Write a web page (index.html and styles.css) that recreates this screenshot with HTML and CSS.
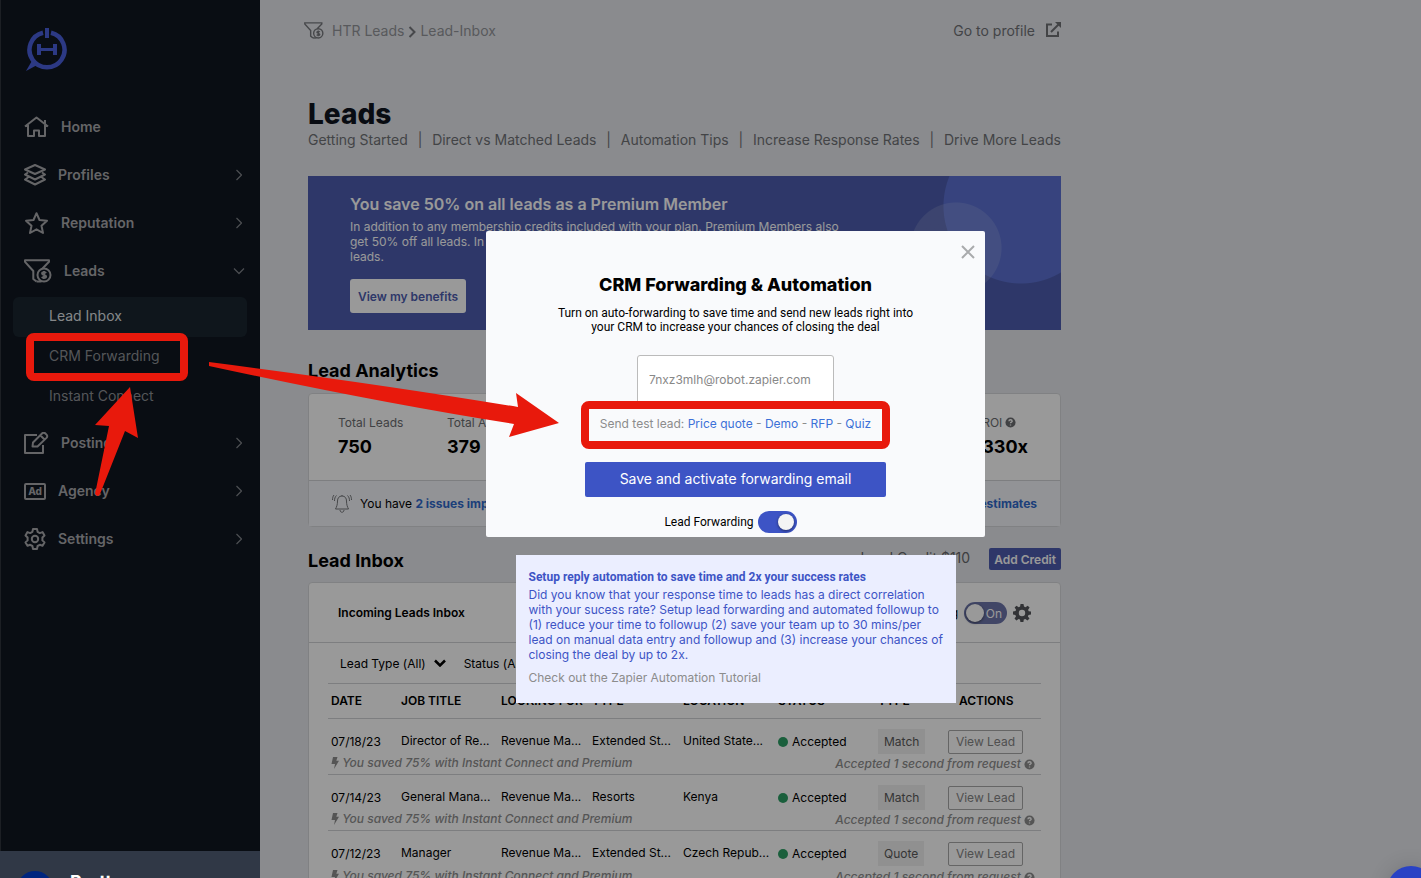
FILE: index.html
```html
<!DOCTYPE html>
<html lang="en">
<head>
    <meta charset="UTF-8">
    <meta name="viewport" content="width=device-width, initial-scale=1.0">
    <title>Lead Inbox</title>
    <link rel="stylesheet" href="styles.css">
</head>
<body>
    <!-- Shared icons -->
    <svg class="sprite" aria-hidden="true">
        <symbol id="funnel" viewBox="0 0 28 24">
            <path d="M12.5 22.5 9.3 20v-8L1 2.800V1.200h24v1.600L18.500 9.500" />
            <circle cx="20" cy="16" r="6.500" />
            <path d="M22 14.200c-.5-.8-1.200-1-2-1-1 0-1.900.5-1.900 1.400 0 2 4 .8 4 2.900 0 .9-1 1.400-2.100 1.400-.9 0-1.700-.4-2.100-1.100M20 12v8" />
            <path d="M12.500 22.500h5" />
        </symbol>
        <symbol id="chev" viewBox="0 0 8 12"><path d="M1.500 1 6.500 6l-5 5" /></symbol>
        <symbol id="help" viewBox="0 0 12 12">
            <circle cx="6" cy="6" r="5.500" fill="currentColor" stroke="none" />
            <path class="help-mark" d="M4.300 4.600C4.300 3.500 5 3 6 3s1.800.6 1.800 1.500C7.800 5.600 6 5.600 6 6.800M6 8.200v1.200" />
        </symbol>
        <symbol id="bolt" viewBox="0 0 8 12"><path d="M2 0h4.500L5.300 3.800H8L3 12l1-5H.5z" fill="currentColor" stroke="none" /></symbol>
    </svg>

    <div class="app">
        <aside class="sidebar">
            <a href="#" class="logo" aria-label="Dashboard">
                <svg width="42" height="46" viewBox="0 0 42 46">
                    <path d="M17 5.800a17.500 17.500 0 1 0 8 0" fill="none" stroke="currentColor" stroke-width="4.500" />
                    <path d="M21 1v10" stroke="currentColor" stroke-width="4" />
                    <path d="M0 44 7 32l6 5z" fill="currentColor" />
                    <path d="M13 17v11M29 17v11" stroke="currentColor" stroke-width="4" />
                    <path d="M13 22.500h16" stroke="currentColor" stroke-width="3" />
                </svg>
            </a>
            <nav>
                <ul class="menu">
                    <li><a href="#" class="menu-item">
                        <svg width="25" height="22" viewBox="0 0 25 22"><path d="M1 10.500 12.500 1.500 24 10.500M4 9v11h6v-5.500h5V20h6V9M21 7.500V4" /></svg>
                        <span>Home</span></a></li>
                    <li><a href="#" class="menu-item">
                        <svg width="22" height="22" viewBox="0 0 22 22"><path d="M11 1 21 5.500 11 10 1 5.500zM4 8.500 1 10.500l10 5 10-5-3-2M4 13.500l-3 2 10 5 10-5-3-2" /></svg>
                        <span>Profiles</span><svg class="arrow" width="8" height="12"><use href="#chev" /></svg></a></li>
                    <li><a href="#" class="menu-item">
                        <svg width="25" height="22" viewBox="0 0 25 22"><path d="m12.500 1.200 3 6.800 7.500.8-5.500 5 1.500 7.200-6.500-3.700L6 21l1.500-7.200-5.500-5L9.500 8z" /></svg>
                        <span>Reputation</span><svg class="arrow" width="8" height="12"><use href="#chev" /></svg></a></li>
                    <li>
                        <a href="#" class="menu-item">
                            <svg width="28" height="24"><use href="#funnel" /></svg>
                            <span>Leads</span><svg class="arrow down" width="8" height="12"><use href="#chev" /></svg></a>
                        <ul class="submenu">
                            <li><a href="#" class="active">Lead Inbox</a></li>
                            <li><a href="#">CRM Forwarding</a></li>
                            <li><a href="#">Instant Connect</a></li>
                        </ul>
                    </li>
                    <li><a href="#" class="menu-item">
                        <svg width="25" height="22" viewBox="0 0 25 22"><path d="M13 3H1v18h18V13M8.500 14.500l.5-4 9-9c1-1 2.400-1 3.400 0l1.100 1.100c1 1 1 2.300 0 3.300l-9 8.600zM16.500 3.500l4 4" /></svg>
                        <span>Posting</span><svg class="arrow" width="8" height="12"><use href="#chev" /></svg></a></li>
                    <li><a href="#" class="menu-item">
                        <b class="ad-icon">Ad</b>
                        <span>Agency</span><svg class="arrow" width="8" height="12"><use href="#chev" /></svg></a></li>
                    <li><a href="#" class="menu-item">
                        <svg width="22" height="22" viewBox="0 0 22 22"><path d="M9 1h4l.6 2.900 2.200 1.200 2.700-1 2 3.400-2.100 2v2.900l2.100 2-2 3.400-2.700-1-2.200 1.200L13 21H9l-.6-3-2.200-1.200-2.700 1-2-3.400 2.100-2V9.500l-2.100-2 2-3.400 2.700 1 2.200-1.200z" /><circle cx="11" cy="11" r="3.200" /></svg>
                        <span>Settings</span><svg class="arrow" width="8" height="12"><use href="#chev" /></svg></a></li>
                </ul>
            </nav>
        </aside>

        <main class="content">
            <header class="topbar">
                <div class="crumbs">
                    <svg width="20" height="17"><use href="#funnel" /></svg>
                    <a href="#">HTR Leads</a>
                    <svg class="crumb-arrow" width="8" height="12"><use href="#chev" /></svg>
                    <a href="#">Lead-Inbox</a>
                </div>
                <a href="#" class="profile-link">Go to profile
                    <svg width="15" height="15" viewBox="0 0 15 15"><path d="M6 2.500H1V14h11V9.500M5 10l8-8" /><path d="M9 0h6v6z" fill="currentColor" stroke="none" /></svg>
                </a>
            </header>

            <h1>Leads</h1>
            <div class="help-links">
                <a href="#">Getting Started</a><i>|</i>
                <a href="#">Direct vs Matched Leads</a><i>|</i>
                <a href="#">Automation Tips</a><i>|</i>
                <a href="#">Increase Response Rates</a><i>|</i>
                <a href="#">Drive More Leads</a>
            </div>

            <section class="banner">
                <h3>You save 50% on all leads as a Premium Member</h3>
                <p>In addition to any membership credits included with your plan. Premium Members also get 50% off all leads. In the last month you could have saved on all of your incoming leads.</p>
                <button class="benefits">View my benefits</button>
            </section>

            <h2>Lead Analytics</h2>
            <section class="card analytics">
                <div class="stats">
                    <div class="stat"><span>Total Leads</span><b>750</b></div>
                    <div class="stat"><span>Total Accepted</span><b>379</b></div>
                    <div class="stat last"><span>ROI <svg width="11" height="11"><use href="#help" /></svg></span><b>330x</b></div>
                </div>
                <div class="alert">
                    <svg width="20" height="20" viewBox="0 0 20 20"><path d="M10 2c-3 0-4.500 2.200-4.500 5 0 4-1 6-2 8h13c-1-2-2-4-2-8 0-2.800-1.500-5-4.500-5zM10 2V1M8 16c0 3 4 3 4 0M4.500 1.500C3 3 2.500 4.500 2.500 7M2 1C.8 2.500.5 4 .5 6M15.500 1.500c1.500 1.500 2 3 2 5.500M18 1c1.200 1.500 1.500 3 1.500 5" /></svg>
                    <span>You have <a href="#">2 issues impacting leads</a></span>
                    <a href="#" class="estimates">Edit estimates</a>
                </div>
            </section>

            <div class="inbox-head">
                <h2>Lead Inbox</h2>
                <span>Lead Credit $110</span>
                <button class="add-credit">Add Credit</button>
            </div>
            <section class="card">
                <div class="inbox-title">
                    <h4>Incoming Leads Inbox</h4>
                    <label for="incoming">Receiving</label>
                    <span class="switch on-label"><input type="checkbox" id="incoming"><em>On</em></span>
                    <svg class="gear" width="18" height="18" viewBox="0 0 18 18"><path fill-rule="evenodd" d="M7.500 0h3l.5 2.600 1.500.6L14.700 1.700l1.900 1.900-1.500 2.200.6 1.500L18 7.500v3l-2.500.4-.6 1.500 1.600 2.200-2 1.900-2.200-1.500-1.500.6-.4 2.400h-3L7 15.600 5.600 15l-2.200 1.500-1.900-1.900L3 12.400l-.6-1.500L0 10.500v-3l2.500-.4.6-1.400-1.500-2.200 1.900-1.800 2.200 1.500 1.400-.6zM9 5.800a3.200 3.200 0 1 0 0 6.400 3.200 3.200 0 0 0 0-6.400z" /></svg>
                </div>
                <div class="filters">
                    <button>Lead Type (All) <svg width="12" height="8" viewBox="0 0 12 8"><path d="m1 1.500 5 5 5-5" /></svg></button>
                    <button>Status (Any) <svg width="12" height="8" viewBox="0 0 12 8"><path d="m1 1.500 5 5 5-5" /></svg></button>
                </div>
                <table>
                    <colgroup><col class="c-date"><col class="c-job"><col class="c-look"><col class="c-kind"><col class="c-loc"><col class="c-status"><col class="c-type"><col></colgroup>
                    <thead>
                        <tr><th>DATE</th><th>JOB TITLE</th><th>LOOKING FOR</th><th>TYPE</th><th>LOCATION</th><th>STATUS</th><th>TYPE</th><th class="actions">ACTIONS</th></tr>
                    </thead>
                    <tbody>
                        <tr class="lead"><td>07/18/23</td><td class="up">Director of Re...</td><td class="up">Revenue Ma...</td><td class="up">Extended St...</td><td class="up">United State...</td><td><i class="dot"></i>Accepted</td><td><span class="tag">Match</span></td><td><button class="view">View Lead</button></td></tr>
                        <tr class="note"><td colspan="4"><svg width="8" height="12"><use href="#bolt" /></svg> You saved 75% with Instant Connect and Premium</td><td colspan="4" class="right">Accepted 1 second from request <svg width="11" height="11"><use href="#help" /></svg></td></tr>
                    </tbody>
                    <tbody>
                        <tr class="lead"><td>07/14/23</td><td class="up">General Mana...</td><td class="up">Revenue Ma...</td><td class="up">Resorts</td><td class="up">Kenya</td><td><i class="dot"></i>Accepted</td><td><span class="tag">Match</span></td><td><button class="view">View Lead</button></td></tr>
                        <tr class="note"><td colspan="4"><svg width="8" height="12"><use href="#bolt" /></svg> You saved 75% with Instant Connect and Premium</td><td colspan="4" class="right">Accepted 1 second from request <svg width="11" height="11"><use href="#help" /></svg></td></tr>
                    </tbody>
                    <tbody>
                        <tr class="lead"><td>07/12/23</td><td class="up">Manager</td><td class="up">Revenue Ma...</td><td class="up">Extended St...</td><td class="up">Czech Repub...</td><td><i class="dot"></i>Accepted</td><td><span class="tag">Quote</span></td><td><button class="view">View Lead</button></td></tr>
                        <tr class="note"><td colspan="4"><svg width="8" height="12"><use href="#bolt" /></svg> You saved 75% with Instant Connect and Premium</td><td colspan="4" class="right">Accepted 1 second from request <svg width="11" height="11"><use href="#help" /></svg></td></tr>
                    </tbody>
                </table>
            </section>
        </main>
    </div>

    <!-- Modal -->
    <div class="overlay">
        <div class="modal" role="dialog" aria-labelledby="modal-title">
            <button class="close" aria-label="Close">
                <svg width="14" height="14" viewBox="0 0 14 14"><path d="m1 1 12 12M13 1 1 13" /></svg>
            </button>
            <h2 id="modal-title">CRM Forwarding &amp; Automation</h2>
            <p>Turn on auto-forwarding to save time and send new leads right into<br>your CRM to increase your chances of closing the deal</p>
            <input type="email" class="email" aria-label="Forwarding email" value="7nxz3mlh@robot.zapier.com">
            <div class="test-lead">Send test lead: <a href="#">Price quote</a> - <a href="#">Demo</a> - <a href="#">RFP</a> - <a href="#">Quiz</a></div>
            <button class="save">Save and activate forwarding email</button>
            <div class="forwarding">
                <label for="forward">Lead Forwarding</label>
                <span class="switch"><input type="checkbox" id="forward" checked></span>
            </div>
        </div>
        <div class="tip">
            <h5>Setup reply automation to save time and 2x your success rates</h5>
            <p>Did you know that your response time to leads has a direct correlation<br>with your sucess rate? Setup lead forwarding and automated followup to<br>(1) reduce your time to followup (2) save your team up to 30 mins/per<br>lead on manual data entry and followup and (3) increase your chances of<br>closing the deal by up to 2x.</p>
            <a href="#">Check out the Zapier Automation Tutorial</a>
        </div>
    </div>

    <div class="user-bar"><span class="avatar"></span><b>Pratt</b></div>
    <button class="chat" aria-label="Open chat"></button>

    <!-- Walkthrough markers -->
    <svg class="markers" width="900" height="520" viewBox="0 0 900 520" aria-hidden="true">
        <rect x="30" y="337" width="154" height="40" rx="4" />
        <rect x="585" y="405" width="301" height="40" rx="4" />
        <path d="M130 387 138 438 125 431 100 494Q98 498 95 494L109 426 95 425z" />
        <path d="M209 362 Q380 384 518 407L516 393 559 423 509 437 514 424Q380 403 209 366z" />
    </svg>
</body>
</html>
```
FILE: styles.css
```css
* {
    box-sizing: border-box;
}
body {
    margin: 0;
    height: 100vh;
    overflow: hidden;
    position: relative;
    font-family: Inter, "Liberation Sans", sans-serif;
    font-size: 12px;
    line-height: 15px;
    color: #000;
    background: #e6e8ed;
}
a {
    color: inherit;
    text-decoration: none;
}
button {
    font: inherit;
    color: inherit;
    border: 0;
    padding: 0;
    background: none;
    cursor: pointer;
}
h1, h2, h3, h4, h5, p, ul {
    margin: 0;
    padding: 0;
}
ul {
    list-style: none;
}
svg {
    fill: none;
    stroke: currentColor;
    flex: none;
}
.sprite {
    position: absolute;
    width: 0;
    height: 0;
}
.app {
    display: flex;
    height: 100vh;
    overflow: hidden;
}

/* Sidebar */
.sidebar {
    width: 260px;
    flex: none;
    background: #0f1621;
    border-left: 1px solid #30353c;
    color: #a9a9ac;
}
.logo {
    display: block;
    height: 103px;
    padding: 27px 0 0 25px;
    color: #4a5fdc;
}
.logo svg {
    stroke: none;
}
.menu-item {
    display: flex;
    align-items: center;
    gap: 12px;
    height: 48px;
    padding: 0 17px 0 23px;
    font-size: 14px;
    font-weight: 600;
}
.menu-item span {
    padding-bottom: 2px;
}
.menu-item svg {
    stroke-width: 2;
    stroke-linejoin: round;
}
.menu-item .arrow {
    margin-left: auto;
    color: #808388;
    stroke-width: 1.2;
}
.menu-item .down {
    transform: rotate(90deg);
}
.ad-icon {
    width: 22px;
    height: 17px;
    border: 2px solid;
    border-radius: 2px;
    font-size: 10px;
    line-height: 13px;
    font-weight: 800;
    text-align: center;
}
.submenu {
    padding: 2px 13px 2px 12px;
}
.submenu a {
    display: block;
    height: 40px;
    padding-left: 36px;
    border-radius: 6px;
    font-size: 14px;
    line-height: 38px;
    color: #8d9094;
}
.submenu .active {
    color: #dfe1e4;
    background: #1a252f;
}

/* Page */
.content {
    flex: 1;
    max-width: 849px;
    padding: 0 48px;
}
.topbar {
    display: flex;
    justify-content: space-between;
    height: 97px;
    padding-top: 22px;
    font-size: 14px;
    line-height: 17px;
    color: #77797d;
}
.crumbs {
    display: flex;
    align-items: flex-start;
    margin-left: -4px;
}
.crumbs > svg:first-child {
    margin-right: 8px;
    stroke-width: 2;
}
.crumb-arrow {
    margin: 4px 4px 0;
    stroke-width: 2;
}
.crumbs a {
    color: #93959a;
}
.profile-link {
    display: flex;
    gap: 11px;
    color: #707276;
}
.profile-link svg {
    stroke-width: 2;
}
h1 {
    font-size: 28px;
    line-height: 34px;
    font-weight: 800;
    color: #10151f;
}
.help-links {
    display: flex;
    justify-content: space-between;
    margin-bottom: 28px;
    font-size: 14px;
    line-height: 17px;
    color: #707276;
}
.help-links i {
    font-style: normal;
}
.banner {
    height: 154px;
    padding: 19px 210px 17px 42px;
    color: #fff;
    background:
        radial-gradient(circle at 648px 72px, rgba(255, 255, 255, 0.13) 45px, transparent 46px),
        radial-gradient(circle at 713px 30px, #5c71d2 77px, transparent 78px),
        #4d5daf;
}
.banner h3 {
    font-size: 16px;
    line-height: 19px;
    font-weight: 600;
    margin-bottom: 5px;
}
.banner p {
    margin-bottom: 15px;
}
.benefits {
    height: 34px;
    padding: 0 8px;
    border-radius: 3px;
    background: #fff;
    color: #4d5daf;
    font-weight: 600;
}
h2 {
    font-size: 18px;
    line-height: 22px;
    font-weight: 700;
}
.content > h2 {
    margin: 30px 0 11px;
}
.card {
    background: #fff;
    border: 1px solid #d6d8db;
    border-radius: 4px;
}
.stats {
    display: flex;
    height: 86px;
    padding: 20px 32px 0 29px;
}
.stat {
    width: 109px;
}
.stat span {
    display: flex;
    align-items: center;
    gap: 3px;
    line-height: 17px;
    margin-bottom: 5px;
    color: #6b6d70;
    white-space: nowrap;
}
.stat b {
    font-size: 18px;
    line-height: 22px;
}
.stat.last {
    width: auto;
    margin-left: auto;
}
.help-mark {
    stroke: #fff;
    stroke-width: 1.5;
}
.alert {
    display: flex;
    align-items: center;
    gap: 8px;
    height: 46px;
    padding: 0 23px;
    border-top: 1px solid #d0d2d6;
    background: #f3f5fa;
}
.alert svg {
    color: #75777a;
}
.alert a {
    color: #3069cb;
    font-weight: 700;
}
.estimates {
    margin-left: auto;
}
.inbox-head {
    display: flex;
    align-items: flex-start;
    margin: 21px 0 12px;
    height: 22px;
}
.inbox-head h2 {
    margin-right: auto;
    padding-top: 2px;
}
.inbox-head span {
    margin-right: 19px;
    font-size: 14px;
    line-height: 20px;
    color: #66686c;
}
.add-credit {
    height: 22px;
    padding: 0 5px;
    border-radius: 2px;
    background: #4d5daf;
    color: #fff;
    font-weight: 600;
}
.inbox-title {
    display: flex;
    align-items: center;
    height: 60px;
    padding: 0 29px;
    border-bottom: 1px solid #d0d2d6;
}
.inbox-title h4 {
    margin-right: auto;
    font-weight: 600;
}
.switch {
    display: flex;
    position: relative;
}
.switch input {
    appearance: none;
    width: 39px;
    height: 22px;
    margin: 0;
    padding: 3px;
    border-radius: 11px;
    background: #3d54c5;
}
.switch input::before {
    content: "";
    display: block;
    width: 16px;
    height: 16px;
    border-radius: 50%;
    background: #f4f4f4;
    box-shadow: 0 1px 3px rgba(0, 0, 0, 0.5);
}
.switch input:checked::before {
    margin-left: 17px;
}
.on-label {
    margin: 0 6px;
}
.on-label input {
    width: 43px;
    background: #6d76ab;
    padding: 2px;
}
.on-label input::before {
    width: 18px;
    height: 18px;
    background: #fff;
}
.on-label em {
    position: absolute;
    right: 5px;
    top: 4px;
    font-style: normal;
    color: #fff;
}
.gear {
    fill: #54565a;
    stroke: none;
}
.filters {
    display: flex;
    gap: 18px;
    height: 40px;
    padding: 0 31px;
}
.filters button {
    display: flex;
    align-items: center;
    gap: 8px;
}
.filters svg {
    stroke-width: 2.5;
}

/* Leads table */
table {
    width: calc(100% - 38px);
    margin: 0 19px;
    table-layout: fixed;
    border-collapse: collapse;
}
.c-date {
    width: 70px;
}
.c-job, .c-status {
    width: 100px;
}
.c-look, .c-kind {
    width: 91px;
}
.c-loc {
    width: 95px;
}
.c-type {
    width: 70px;
}
thead {
    border-top: 1px solid #d0d2d6;
}
tbody {
    border-top: 1px solid #d0d2d6;
}
th {
    height: 35px;
    padding: 0 3px 2px;
    text-align: left;
    font-weight: 600;
    white-space: nowrap;
}
th.actions {
    padding-left: 14px;
}
td {
    padding: 0 3px;
    white-space: nowrap;
}
.lead td {
    height: 36px;
    padding-top: 10px;
}
.lead .up {
    padding-top: 7px;
}
.dot {
    display: inline-block;
    width: 10px;
    height: 10px;
    margin-right: 4px;
    border-radius: 50%;
    background: #2c9f64;
    vertical-align: -1px;
}
.tag {
    display: inline-block;
    padding: 5px 6px;
    background: #f0f0f0;
    color: #5a5a5a;
}
.view {
    width: 75px;
    height: 24px;
    border: 1px solid #a8a8a8;
    border-radius: 2px;
    color: #858585;
}
.note td {
    height: 20px;
    padding-bottom: 3px;
    font-style: italic;
    font-weight: 500;
    color: #8e8e8e;
}
.note .right {
    padding-right: 6px;
    padding-bottom: 1px;
    text-align: right;
}
.note svg {
    vertical-align: -2px;
}

/* Modal */
.overlay {
    position: absolute;
    inset: 0;
    display: flex;
    flex-direction: column;
    align-items: center;
    gap: 18px;
    padding: 231px 0 0 50px;
    background: rgba(0, 0, 0, 0.4);
}
.modal {
    position: relative;
    display: flex;
    flex-direction: column;
    align-items: center;
    width: 499px;
    padding: 43px 20px 4px;
    border-radius: 2px;
    background: #f9fafc;
    text-align: center;
}
.modal h2 {
    font-weight: 800;
}
.close {
    position: absolute;
    top: 14px;
    right: 10px;
    height: 14px;
    color: #a9aaac;
}
.close svg {
    display: block;
    stroke-width: 2;
}
.modal p {
    margin: 10px 0 21px;
    font-family: Roboto, "Liberation Sans", sans-serif;
    line-height: 14px;
}
.email {
    width: 197px;
    height: 49px;
    padding: 0 11px;
    border: 1px solid #bbb;
    border-radius: 3px;
    background: #fff;
    font: 12px Inter, "Liberation Sans", sans-serif;
    color: #888;
}
.test-lead {
    margin: 12px 0 31px;
    color: #8c8c8c;
}
.test-lead a {
    color: #3c71d8;
}
.save {
    width: 301px;
    height: 35px;
    margin-bottom: 14px;
    padding-bottom: 2px;
    border-radius: 2px;
    background: #3d54c5;
    color: #fff;
    font-size: 14px;
}
.forwarding {
    display: flex;
    align-items: center;
    gap: 4px;
    margin-right: 10px;
    font-family: Roboto, "Liberation Sans", sans-serif;
}
.tip {
    width: 440px;
    height: 148px;
    padding: 15px 12px 0 13px;
    background: #ebeeff;
    color: #3d54c5;
}
.tip h5 {
    font: bold 12px/15px Roboto, "Liberation Sans", sans-serif;
    margin-bottom: 2px;
}
.tip p {
    margin-bottom: 8px;
    white-space: nowrap;
}
.tip a {
    color: #8c8c8c;
}

.user-bar {
    position: absolute;
    left: 0;
    bottom: 0;
    display: flex;
    gap: 17px;
    width: 260px;
    height: 27px;
    padding: 20px 17px 0;
    overflow: hidden;
    background: #303846;
    color: #fff;
    font-size: 18px;
    line-height: 22px;
}
.avatar {
    width: 36px;
    height: 36px;
    border-radius: 50%;
    background: #00257e;
}
.chat {
    position: absolute;
    right: -14px;
    bottom: -36px;
    width: 48px;
    height: 48px;
    border-radius: 50%;
    background: #2942c5;
    box-shadow: 0 0 20px rgba(0, 0, 0, 0.15);
}
.markers {
    position: absolute;
    top: 0;
    left: 0;
    pointer-events: none;
    stroke: none;
    fill: #e8190c;
}
.markers rect {
    fill: none;
    stroke: #e8190c;
    stroke-width: 8;
}
```
